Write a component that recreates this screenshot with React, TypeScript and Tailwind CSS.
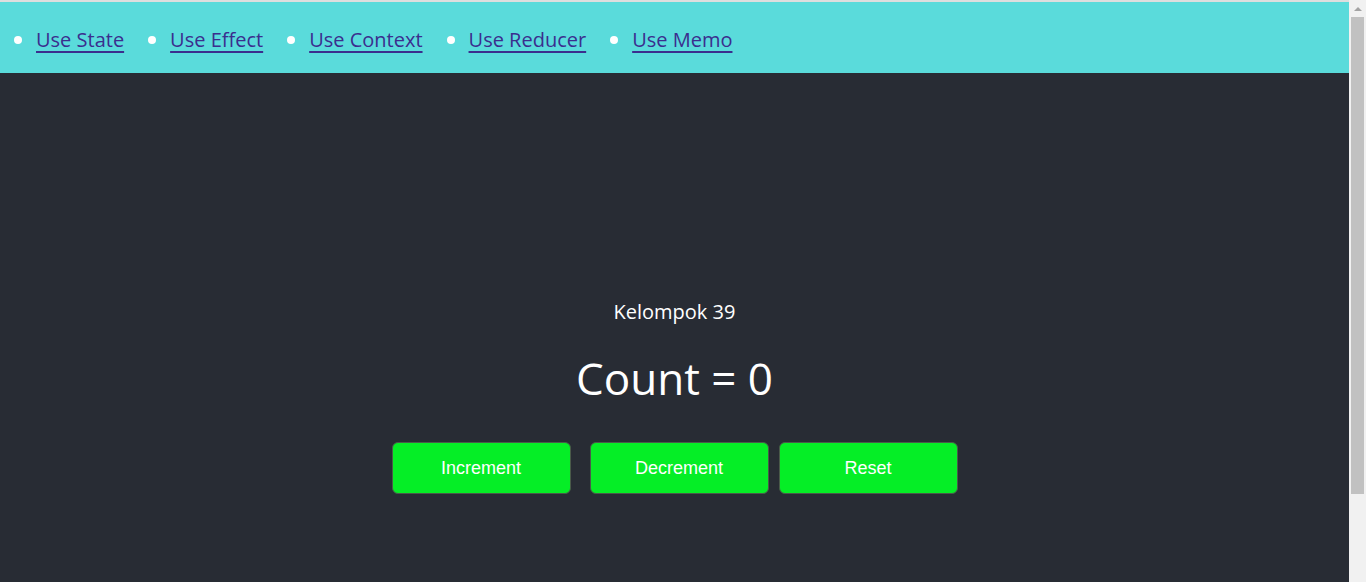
import React, { useState } from "react";

const links = ["Use State", "Use Effect", "Use Context", "Use Reducer", "Use Memo"];

function Scrollbar() {
  return (
    <aside className="flex w-[17px] flex-col items-center bg-[#f1f1f1]">
      <div className="flex h-[17px] w-full items-center justify-center">
        <span className="h-0 w-0 border-x-[4px] border-b-[4px] border-x-transparent border-b-[#a3a3a3]" />
      </div>
      <div className="h-[477px] w-[13px] bg-[#c1c1c1]" />
    </aside>
  );
}

export default function App() {
  const [count, setCount] = useState(0);

  return (
    <div className="flex h-[582px] overflow-hidden bg-[#282c34] font-['Open_Sans','Noto_Sans',sans-serif]">
      <div className="flex-1">
        <nav className="h-[73px] border-t-2 border-[#dedede] bg-[#5adbdb]">
          <ul className="flex h-full items-center pl-[14px] pt-[4px]">
            {links.map((l) => (
              <li key={l} className="mr-[24px] flex items-center">
                <span className="mr-[14px] h-[8px] w-[8px] rounded-full bg-white" />
                <a
                  href="#"
                  className="text-[20px] leading-none text-[#3b2e8e] underline underline-offset-[4px]"
                >
                  {l}
                </a>
              </li>
            ))}
          </ul>
        </nav>
        <main className="flex flex-col items-center pt-[226px] text-white">
          <p className="text-[20px] leading-[26px]">Kelompok 39</p>
          <h1 className="mt-[25px] text-[44px] leading-[56px]">Count = {count}</h1>
          <div className="mt-[36px] flex font-['Liberation_Sans',Arial,sans-serif]">
            <button
              onClick={() => setCount(count + 1)}
              className="h-[52px] w-[179px] rounded-[6px] border border-[#4a5a4a] bg-[#05ee26] text-[18px] text-white"
            >
              Increment
            </button>
            <button
              onClick={() => setCount(count - 1)}
              className="ml-[19px] h-[52px] w-[179px] rounded-[6px] border border-[#4a5a4a] bg-[#05ee26] text-[18px] text-white"
            >
              Decrement
            </button>
            <button
              onClick={() => setCount(0)}
              className="ml-[10px] h-[52px] w-[179px] rounded-[6px] border border-[#4a5a4a] bg-[#05ee26] text-[18px] text-white"
            >
              Reset
            </button>
          </div>
        </main>
      </div>
      <Scrollbar />
    </div>
  );
}
